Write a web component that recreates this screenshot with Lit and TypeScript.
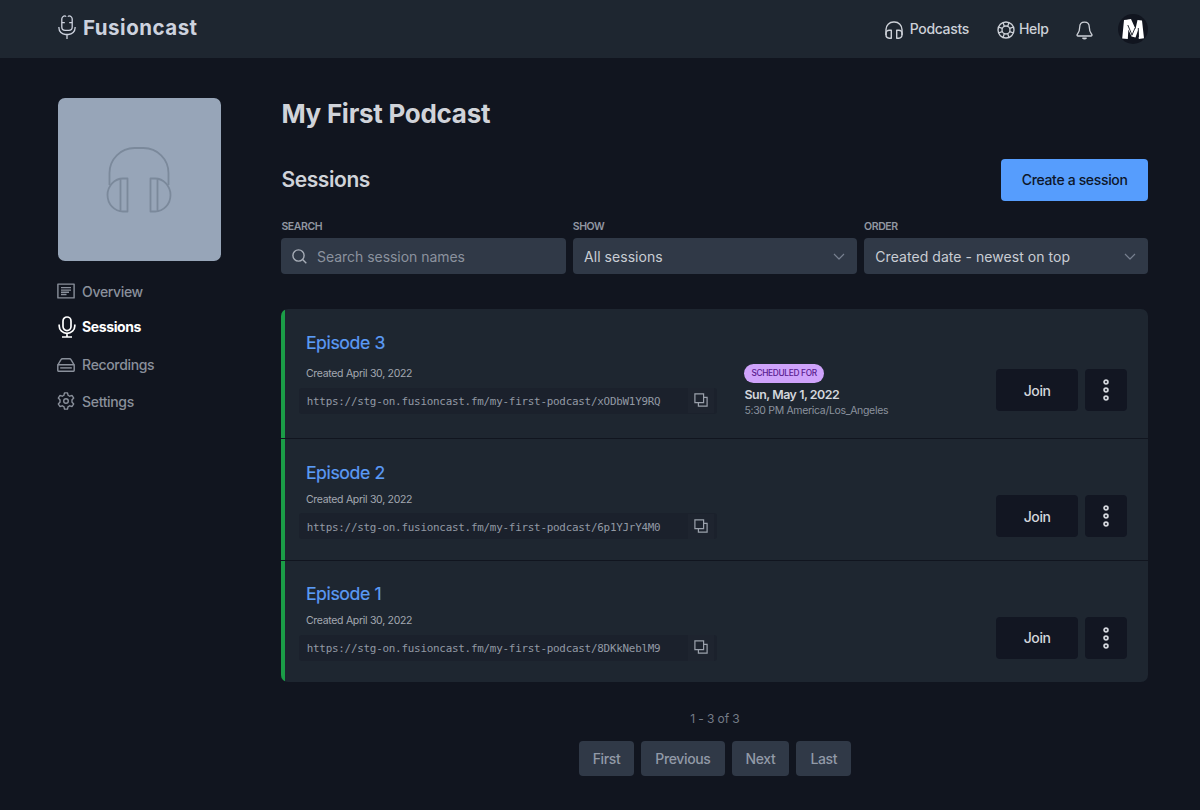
import { LitElement, html, css, svg, nothing } from "lit";
import { customElement, property } from "lit/decorators.js";
import { classMap } from "lit/directives/class-map.js";

interface Session {
  title: string;
  created: string;
  url: string;
  day?: string;
  time?: string;
}

const sessions: Session[] = [
  {
    title: "Episode 3",
    created: "Created April 30, 2022",
    url: "https://stg-on.fusioncast.fm/my-first-podcast/xODbW1Y9RQ",
    day: "Sun, May 1, 2022",
    time: "5:30 PM America/Los_Angeles",
  },
  {
    title: "Episode 2",
    created: "Created April 30, 2022",
    url: "https://stg-on.fusioncast.fm/my-first-podcast/6p1YJrY4M0",
  },
  {
    title: "Episode 1",
    created: "Created April 30, 2022",
    url: "https://stg-on.fusioncast.fm/my-first-podcast/8DKkNeblM9",
  },
];

const icons: Record<string, { w: number; h: number; body: unknown }> = {
  logo: {
    w: 18, h: 25,
    body: svg`<g stroke-width="1.3"><path d="M7.7 .9H7A3.200 3.200 0 0 0 3.800 4.100V12A3.400 3.400 0 0 0 7.200 15.400H10.800A3.400 3.400 0 0 0 14.200 12V4.100A3.200 3.200 0 0 0 11 .9H10.300"/><path d="M3.800 7.700H6.800M11.200 7.700H14.200M7.700 .9V1.800M10.300 .9V1.800"/><path d="M.9 12V12.800A6.700 6.700 0 0 0 7.600 19.500H10.400A6.700 6.700 0 0 0 17.100 12.800V12M9 19.500V24"/></g>`,
  },
  headphones: {
    w: 18, h: 18,
    body: svg`<g stroke-width="1.4"><path d="M1 14V8.500A7.500 7.500 0 0 1 8.500 1H9.500A7.500 7.500 0 0 1 17 8.500V14"/><path d="M1 12.300A3.100 3.100 0 0 1 4.100 9.200H6.300V17.200H4.100A3.100 3.100 0 0 1 1 14.100ZM17 12.300A3.100 3.100 0 0 0 13.900 9.200H11.700V17.200H13.900A3.100 3.100 0 0 0 17 14.100Z"/></g>`,
  },
  help: {
    w: 18, h: 18,
    body: svg`<g stroke-width="1.35"><circle cx="9" cy="9" r="8"/><circle cx="9" cy="9" r="4"/><path d="M7.300 5.400L6.100 1.600M10.700 5.400L11.900 1.600M7.300 12.600L6.100 16.400M10.700 12.600L11.900 16.400M5.400 7.300L1.600 6.100M5.400 10.700L1.600 11.900M12.600 7.300L16.400 6.100M12.600 10.700L16.400 11.900"/></g>`,
  },
  bell: {
    w: 17, h: 19,
    body: svg`<g stroke-width="1.3"><path d="M8.500 1.200C5.200 1.200 3.700 3.600 3.700 6.300C3.700 10.500 2.800 11.500 1.500 13C.5 14.200 1.100 15 2.200 15H14.800C15.900 15 16.500 14.200 15.500 13C14.200 11.500 13.300 10.500 13.300 6.300C13.300 3.600 11.800 1.200 8.500 1.200Z"/><path d="M6.700 17.200C7.500 18.200 9.500 18.200 10.300 17.200Z"/></g>`,
  },
  cover: {
    w: 66, h: 66,
    body: svg`<g stroke-width="1.8"><path d="M3.500 38V26A25 25 0 0 1 28.500 1H37.500A25 25 0 0 1 62.500 26V38"/><path d="M21.500 31.500V64.500H17A15.500 16.500 0 0 1 17 31.500ZM14.500 31.700V64.300M44.500 31.500V64.500H49A15.500 16.500 0 0 0 49 31.500ZM51.500 31.700V64.300"/></g>`,
  },
  overview: {
    w: 18, h: 16,
    body: svg`<path stroke-width="1.400" d="M.9 1.100H17.100V14.900H.9ZM4 4.600H14M4 7.100H14M4 9.300H12M4 11.500H9.500"/>`,
  },
  mic: {
    w: 18, h: 22,
    body: svg`<g stroke-width="1.7"><rect x="5" y="1" width="8" height="13.600" rx="4"/><path d="M1.200 8.500V10A7.800 7.400 0 0 0 16.800 10V8.500M9 17.400V21M4 21H14"/></g>`,
  },
  drive: {
    w: 18, h: 14,
    body: svg`<g stroke-width="1.450"><path d="M.8 7L4 1.700Q4.500 .8 5.500 .8H12.500Q13.500 .8 14 1.700L17.200 7"/><rect x=".8" y="6.700" width="16.400" height="6.500" rx=".6"/><path d="M3.200 9.900H14.800"/></g>`,
  },
  gear: {
    w: 18, h: 18,
    body: svg`<g stroke-width="1.400"><path d="M7.500 .9H10.500L11.100 3.300Q12 3.600 12.700 4.200L15.100 3.500L16.700 6.100L14.900 7.900Q15.200 9 14.900 10.100L16.700 11.900L15.100 14.500L12.700 13.800Q12 14.400 11.100 14.700L10.500 17.100H7.500L6.900 14.700Q6 14.400 5.300 13.800L2.900 14.500L1.300 11.900L3.100 10.100Q2.800 9 3.100 7.900L1.300 6.100L2.900 3.500L5.300 4.200Q6 3.600 6.900 3.300Z"/><circle cx="9" cy="9" r="2.300"/></g>`,
  },
  search: {
    w: 15, h: 15,
    body: svg`<g stroke-width="1.400"><circle cx="6.500" cy="6.500" r="5.600"/><path d="M10.600 10.600L14.300 14.300"/></g>`,
  },
  chevron: {
    w: 12, h: 7,
    body: svg`<path stroke-width="1.200" d="M1 1L6 6L11 1"/>`,
  },
  copy: {
    w: 14, h: 14,
    body: svg`<path stroke-width="1.200" stroke-linejoin="miter" d="M.9 .9H9.600V9.600H.9ZM9.600 4.400H13.100V13.100H4.400V9.600"/>`,
  },
  dots: {
    w: 6, h: 22,
    body: svg`<g stroke-width="1.800"><circle cx="3" cy="3" r="1.900"/><circle cx="3" cy="11" r="1.900"/><circle cx="3" cy="19" r="1.900"/></g>`,
  },
};

@customElement("fc-icon")
class FcIcon extends LitElement {
  @property() name = "";
  static styles = css`
    :host { display: block; flex: none; }
    .glyph { display: block; fill: none; stroke: currentColor; stroke-linejoin: round; overflow: visible; }
  `;
  render() {
    const i = icons[this.name];
    return html`<svg class="glyph" width=${i.w} height=${i.h} viewBox="0 0 ${i.w} ${i.h}">${i.body}</svg>`;
  }
}

@customElement("session-row")
class SessionRow extends LitElement {
  @property({ attribute: false }) session!: Session;
  static styles = css`
    :host { display: block; background: #1e2630; border-left: 4px solid #1b9d47; padding: 0 21px 20.600px 20.500px; }
    .title { margin: 0; padding-top: 18.500px; height: 35px; line-height: 30px; font-size: 17.700px; font-weight: 400; letter-spacing: -.4px; color: #5b9bf5; -webkit-text-stroke: .2px; }
    .body { display: grid; grid-template-columns: 438.500px 1fr auto; align-items: center; }
    .info { display: flex; flex-direction: column; height: 46.500px; }
    .created { font-size: 10.500px; line-height: 13px; height: 20.500px; letter-spacing: -.3px; color: #a3a8b1; }
    .link { display: flex; align-items: center; width: 410px; height: 26px; margin-left: -6.500px; padding-left: 7.300px; background: #1b212c; border-radius: 3px;
      font: 10.900px/26px "DejaVu Sans Mono", monospace; color: #9299a4; letter-spacing: -.24px; }
    .url { flex: 1; padding-top: 3px; }
    .copy { display: flex; align-items: center; justify-content: center; width: 26px; height: 24px; margin-right: 3px; padding-bottom: 1.500px; background: #1e242f; color: #9ba1ac; }
    .when { font-size: 10.500px; line-height: 15px; letter-spacing: -.32px; color: #8b929e; }
    .tag { display: block; width: fit-content; height: 18.500px; margin-top: 1.500px; padding: 0 7px; border-radius: 9.500px; background: #cfa3fb; color: #59208f; font-size: 8.300px; font-weight: 500; line-height: 18.500px; letter-spacing: -.3px; }
    .day { font-size: 12.400px; font-weight: 600; line-height: 16px; padding-top: 4px; letter-spacing: -.45px; color: #d3d6dc; }
    .actions { display: flex; gap: 7px; grid-column: 3; }
    .btn { display: flex; align-items: center; justify-content: center; height: 42px; border-radius: 4px; background: #121622; color: #d3d6dc; font-size: 14px; font-weight: 500; letter-spacing: -.4px; }
    .join { width: 82.500px; }
    .more { width: 42px; }
  `;
  render() {
    const s = this.session;
    return html`
      <h3 class="title">${s.title}</h3>
      <div class="body">
        <div class="info">
          <div class="created">${s.created}</div>
          <div class="link"><span class="url">${s.url}</span><span class="copy"><fc-icon name="copy"></fc-icon></span></div>
        </div>
        ${s.day
          ? html`<div class="when"><span class="tag">SCHEDULED FOR</span><div class="day">${s.day}</div><div>${s.time}</div></div>`
          : nothing}
        <div class="actions">
          <div class="btn join">Join</div>
          <div class="btn more"><fc-icon name="dots"></fc-icon></div>
        </div>
      </div>`;
  }
}

@customElement("app-root")
class AppRoot extends LitElement {
  static styles = css`
    :host { display: block; height: 810px; overflow: hidden; background: #11151f; color: #d0d3d9; font-family: Inter, sans-serif; font-size: 14px; }
    * { box-sizing: border-box; }
    .top { display: flex; align-items: center; height: 58.400px; padding: 0 52px 0 58px; background: #1e2630; }
    .brand { display: flex; align-items: center; gap: 7px; margin-right: auto; padding-bottom: 4px; font-size: 20.500px; font-weight: 700; letter-spacing: .5px; color: #cdd2de; }
    .link { display: flex; align-items: center; font-weight: 500; letter-spacing: -.33px; color: #cdd1d8; }
    .link span { padding-bottom: 1px; }
    .link fc-icon { padding-top: 2px; }
    .podcasts { gap: 7px; margin-right: 28px; }
    .help { gap: 4px; margin-right: 27.500px; }
    .bell { margin-right: 25px; color: #cdd1d8; padding-top: 3px; }
    .avatar { display: block; }
    .page { display: grid; grid-template-columns: 163.500px 867px; column-gap: 60.400px; padding: 39.400px 0 0 57.500px; }
    .cover { display: flex; align-items: center; justify-content: center; height: 163.500px; border-radius: 7px; background: #97a5b8; color: #7b899b; }
    .nav { display: flex; flex-direction: column; padding-top: 12.500px; }
    .item { display: flex; align-items: center; gap: 7px; height: 35px; color: #8a909b; font-weight: 500; letter-spacing: -.35px; }
    .item fc-icon { width: 18px; margin-left: -.4px; }
    .tall { height: 38px; margin-top: 2px; }
    .item.active { color: #fff; font-weight: 700; letter-spacing: -.4px; }
    .item.active fc-icon { margin: 1px -1px 0 .6px; }
    .heading { margin: 0; height: 32px; line-height: 32px; font-size: 26px; font-weight: 700; letter-spacing: -.27px; }
    .bar { display: flex; justify-content: space-between; align-items: center; height: 42px; margin-top: 29px; }
    .sub { margin: 0; font-size: 21px; font-weight: 600; letter-spacing: -.4px; }
    .create { width: 147.500px; height: 42px; border-radius: 4px; background: #569dfd; color: #0d1629; font-weight: 500; line-height: 42px; letter-spacing: -.34px; text-align: center; }
    .filters { display: grid; grid-template-columns: repeat(3, 1fr); column-gap: 7px; margin-top: 18px; }
    .label { height: 19px; line-height: 16px; font-size: 10.500px; font-weight: 600; letter-spacing: -.4px; color: #9197a2; }
    .field { display: flex; align-items: center; height: 36.500px; padding: 0 12px 0 11.300px; border-radius: 4px; background: #303947; color: #c9cdd4; font-size: 14px; letter-spacing: .05px; }
    .field span { flex: 1; }
    .field fc-icon { color: #778090; }
    .placeholder { gap: 10.500px; padding-left: 10.200px; color: #8b929e; letter-spacing: -.04px; }
    .field.placeholder fc-icon { color: #a7adb7; }
    .list { display: flex; flex-direction: column; gap: 1px; margin-top: 35px; border-radius: 7px; overflow: hidden; }
    .count { margin-top: 28px; line-height: 18px; text-align: center; font-size: 12px; letter-spacing: -.1px; color: #747b87; }
    .pager { display: flex; justify-content: center; gap: 7px; margin-top: 13.500px; }
    .pager div { height: 35px; padding: 0 14px; border-radius: 4px; background: #303947; color: #929aa7; font-weight: 500; line-height: 35px; letter-spacing: -.36px; }
  `;

  private navItem(icon: string, text: string, cls = "") {
    return html`<div class=${classMap({ item: true, active: cls === "active", tall: cls === "tall" })}>
      <fc-icon name=${icon}></fc-icon><span>${text}</span></div>`;
  }

  render() {
    return html`
      <header class="top">
        <div class="brand"><fc-icon name="logo"></fc-icon><span>Fusioncast</span></div>
        <div class="link podcasts"><fc-icon name="headphones"></fc-icon><span>Podcasts</span></div>
        <div class="link help"><fc-icon name="help"></fc-icon><span>Help</span></div>
        <fc-icon class="bell" name="bell"></fc-icon>
        <svg class="avatar" width="30" height="30" viewBox="0 0 30 30">
          <circle cx="15" cy="15" r="15" fill="#11151f" />
          <path fill="#fff" d="M6 6L11 5.500L9.800 25L4.200 24.500ZM19.500 6L24 6.500L26 24.200L20.800 25ZM9.500 5.500L13 5L17.500 15L19.500 6L23.500 6.500L17.500 23.500L13.500 22.500L7 8Z" />
          <path stroke="#11151f" stroke-width=".9" fill="none" d="M9.800 11L14 21M17 14L13.800 21.500M20.300 14L20.500 23" />
        </svg>
      </header>
      <div class="page">
        <aside>
          <div class="cover"><fc-icon name="cover"></fc-icon></div>
          <nav class="nav">
            ${this.navItem("overview", "Overview")}
            ${this.navItem("mic", "Sessions", "active")}
            ${this.navItem("drive", "Recordings", "tall")}
            ${this.navItem("gear", "Settings")}
          </nav>
        </aside>
        <main>
          <h1 class="heading">My First Podcast</h1>
          <div class="bar"><h2 class="sub">Sessions</h2><div class="create">Create a session</div></div>
          <div class="filters">
            <div><div class="label">SEARCH</div><div class="field placeholder"><fc-icon name="search"></fc-icon><span>Search session names</span></div></div>
            <div><div class="label">SHOW</div><div class="field"><span>All sessions</span><fc-icon name="chevron"></fc-icon></div></div>
            <div><div class="label">ORDER</div><div class="field"><span>Created date - newest on top</span><fc-icon name="chevron"></fc-icon></div></div>
          </div>
          <div class="list">${sessions.map((s) => html`<session-row .session=${s}></session-row>`)}</div>
          <div class="count">1 - 3 of 3</div>
          <div class="pager"><div>First</div><div>Previous</div><div>Next</div><div>Last</div></div>
        </main>
      </div>`;
  }
}
